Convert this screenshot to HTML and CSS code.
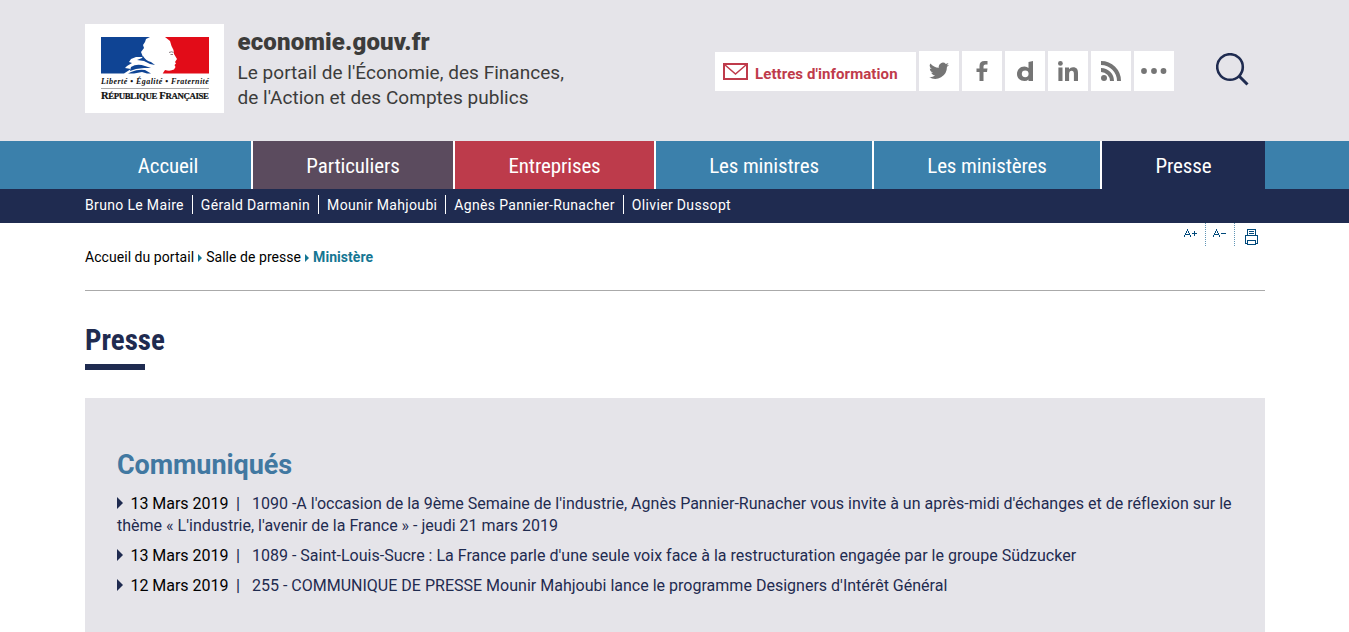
FILE: index.html
```html
<!DOCTYPE html>
<html lang="fr">
<head>
<meta charset="utf-8">
<title>Presse | economie.gouv.fr</title>
<link rel="stylesheet" href="styles.css">
</head>
<body>
<header class="header">
  <div class="container header-row">
    <div class="logo">
      <svg class="flag" width="108" height="37" viewBox="0 0 108 37">
        <path fill="#fff" d="M0 0H108V36.500H0Z"/>
        <path fill="#0f4494" d="M0 0H49L45 2 44 5 42 8 43 11 40 15 42 20 35 20 30 22 28 25 31 26 26 29 24 31 30 32 23 36.500H0Z"/>
        <path fill="#e20c18" d="M64 0H108V36.500H61.700L64 33Q69 34.500 73 32.500L74.500 30 73.500 28 75 26.500 74 25 76 22 73 17 72.500 13 70.500 9 69 4Z"/>
        <path fill="#0f4494" d="M42 19Q45 24 50 25L54 28 49 27 43 24 36 23 41 21ZM30 30Q36 26 44 29L50 31 43 31 35 32 29 34ZM30 35Q37 32 44 33L50 36.500H46L41 35 33 36.500H27Z"/>
        <path stroke="#8b8084" stroke-width="1" fill="none" d="M68 15.500Q71 14 72.500 15.500M69.500 17.500H72"/>
      </svg>
      <div class="motto">Liberté • Égalité • Fraternité</div>
      <div class="republic">R<small>ÉPUBLIQUE</small> F<small>RANÇAISE</small></div>
    </div>
    <div class="brand">
      <div class="site">economie.gouv.fr</div>
      <div class="tagline">Le portail de l'Économie, des Finances,<br>de l'Action et des Comptes publics</div>
    </div>
    <div class="social">
      <a class="letters"><svg width="25" height="17" viewBox="0 0 25 17" fill="none" stroke="#bf3b4b"><path stroke-width="2" d="M1 1H24V16H1Z"/><path stroke-width="1.500" d="M1.500 1.500L12.500 11 23.500 1.500"/></svg><span>Lettres d'information</span></a>
      <a class="tile"><svg width="20" height="18" viewBox="0 0 24 20"><path fill="#757575" d="M24 2.400a10 10 0 0 1-2.800.8A5 5 0 0 0 23.300.4a10 10 0 0 1-3.100 1.200A4.900 4.900 0 0 0 11.800 6 14 14 0 0 1 1.700.9a4.900 4.900 0 0 0 1.500 6.600A5 5 0 0 1 1 6.900a4.900 4.900 0 0 0 3.900 4.900 5 5 0 0 1-2.200.1 4.900 4.900 0 0 0 4.600 3.400A9.900 9.900 0 0 1 0 17.300 14 14 0 0 0 21.500 5 10 10 0 0 0 24 2.400Z"/></svg></a>
      <a class="tile"><svg width="12" height="20" viewBox="0 0 12 20"><path fill="#757575" d="M3.500 20V11H.5V7.500H3.500V5Q3.500 0 8.500 0H11.500V3.500H9.500Q7.500 3.500 7.500 5.300V7.500H11.500L11 11H7.500V20Z"/></svg></a>
      <a class="tile"><svg width="17" height="20" viewBox="0 0 17 20"><path fill="#757575" fill-rule="evenodd" d="M11.500 1L16 0V20H11.500V18.500Q10 20 7.500 20C3 20 0 17 0 13S3 5.500 7.500 5.500Q10 5.500 11.500 7ZM8.200 9.400A3.400 3.400 0 1 0 8.200 16.200A3.400 3.400 0 1 0 8.200 9.400Z"/></svg></a>
      <a class="tile"><svg width="20" height="20" viewBox="0 0 20 20"><g fill="#757575"><circle cx="2.400" cy="2.400" r="2.400"/><path d="M.4 6.500H4.500V20H.4ZM7 6.500H11V8.300Q12.300 6.200 15 6.200C19 6.200 20 8.500 20 12V20H15.900V13Q15.900 9.800 13.600 9.800T11.100 13V20H7Z"/></g></svg></a>
      <a class="tile"><svg width="20" height="20" viewBox="0 0 20 20"><circle cx="3" cy="17" r="3" fill="#757575"/><path fill="none" stroke="#757575" stroke-width="4" d="M0 9A11 11 0 0 1 11 20M0 2A18 18 0 0 1 18 20"/></svg></a>
      <a class="tile"><svg width="26" height="6" viewBox="0 0 26 6" fill="#757575"><circle cx="3" cy="3" r="2.900"/><circle cx="13" cy="3" r="2.900"/><circle cx="22.500" cy="3" r="2.900"/></svg></a>
    </div>
    <svg class="search" width="33" height="33" viewBox="0 0 33 33" fill="none" stroke="#1f2b50"><circle cx="14" cy="14" r="12.800" stroke-width="2.600"/><path stroke-width="3" d="M23 23L31.500 31.500"/></svg>
  </div>
</header>
<nav class="nav">
  <div class="container nav-row">
    <a class="home"><span>Accueil</span></a>
    <a class="people"><span>Particuliers</span></a>
    <a class="business"><span>Entreprises</span></a>
    <a class="ministers"><span>Les ministres</span></a>
    <a class="ministries"><span>Les ministères</span></a>
    <a class="press"><span>Presse</span></a>
  </div>
</nav>
<div class="subnav">
  <div class="container subnav-row"><a>Bruno Le Maire</a><a>Gérald Darmanin</a><a>Mounir Mahjoubi</a><a>Agnès Pannier-Runacher</a><a>Olivier Dussopt</a></div>
</div>
<main class="container">
  <div class="tools-row">
    <div class="crumbs"><a>Accueil du portail</a><i></i><a>Salle de presse</a><i></i><b>Ministère</b></div>
    <div class="tools">
      <a><svg width="13" height="9" viewBox="0 0 13 9" shape-rendering="crispEdges"><path fill="#00497b" d="M3 0h1v2h-1zM2 2h1v2h-1zM4 2h1v2h-1zM1 4h1v2h-1zM5 4h1v2h-1zM2 5h3v1h-3zM0 6h1v2h-1zM6 6h1v2h-1zM8 4h5v1h-5zM10 2h1v5h-1z"/></svg></a>
      <a><svg width="13" height="9" viewBox="0 0 13 9" shape-rendering="crispEdges"><path fill="#00497b" d="M3 0h1v2h-1zM2 2h1v2h-1zM4 2h1v2h-1zM1 4h1v2h-1zM5 4h1v2h-1zM2 5h3v1h-3zM0 6h1v2h-1zM6 6h1v2h-1zM8 4h5v1h-5z"/></svg></a>
      <a class="print"><svg width="13" height="16" viewBox="0 0 13 16" fill="none" stroke="#00497b" shape-rendering="crispEdges"><path d="M2.500 6V.5H10.500V6M4 2.500H9M4 4.500H9M2 14.500H.5V6.500H12.500V14.500H11M2.500 11.500H10.500V15.500H2.500Z"/></svg></a>
    </div>
  </div>
  <h1><span>Presse</span></h1>
  <section class="panel">
    <h2>Communiqués</h2>
    <ul>
      <li><i></i><span class="date">13 Mars 2019</span><span class="bar">|</span><a>1090 -A l'occasion de la 9ème Semaine de l'industrie, Agnès Pannier-Runacher vous invite à un après-midi d'échanges et de réflexion sur le thème « L'industrie, l'avenir de la France » - jeudi 21 mars 2019</a></li>
      <li><i></i><span class="date">13 Mars 2019</span><span class="bar">|</span><a>1089 - Saint-Louis-Sucre : La France parle d'une seule voix face à la restructuration engagée par le groupe Südzucker</a></li>
      <li><i></i><span class="date">12 Mars 2019</span><span class="bar">|</span><a>255 - COMMUNIQUE DE PRESSE Mounir Mahjoubi lance le programme Designers d'Intérêt Général</a></li>
    </ul>
  </section>
</main>
</body>
</html>
```
FILE: styles.css
```css
* { box-sizing: border-box; }
body { margin: 0; height: 632px; overflow: hidden; background: #fff; color: #000; font-family: Roboto, "Liberation Sans", sans-serif; }
.container { width: 1180px; margin-left: 85px; }
.header { height: 141px; background: #e5e4e9; }
.header-row { display: flex; align-items: flex-start; }
.logo { width: 139px; height: 89px; margin-top: 24.4px; background: #fff; padding: 12.6px 0 0 16px; white-space: nowrap; color: #111; font-family: "Liberation Serif", serif; }
.flag { display: block; }
.motto { font-size: 8px; line-height: 9px; margin-top: 3px; font-style: italic; font-weight: bold; letter-spacing: .46px; }
.republic { width: 108px; border-top: 1px solid #aaa; margin-top: 2px; font-size: 10.5px; line-height: 13px; font-weight: bold; letter-spacing: -.34px; -webkit-text-stroke: .2px #111; }
.republic small { font-size: 8.8px; }
.brand { margin: 26px 0 0 13.5px; width: 476.5px; color: #3c3c3b; }
.site { font-size: 24px; line-height: 32px; font-weight: 900; letter-spacing: .14px; }
.tagline { font-size: 19px; line-height: 25px; margin-top: 2px; letter-spacing: .03px; }
.social { display: flex; align-items: flex-end; gap: 3px; margin: 51px 0 0 1px; }
.letters { display: flex; align-items: center; width: 201px; height: 39px; background: #fff; padding-left: 8px; gap: 7px; color: #bf3b4b; font-size: 15px; font-weight: 700; white-space: nowrap; letter-spacing: .09px; }
.letters span { padding-top: 5px; }
.tile { display: flex; align-items: center; justify-content: center; width: 40px; height: 40px; background: #fff; }
.search { margin: 53px 0 0 42px; }
.nav { height: 48px; background: #3b80ab; }
.nav-row { display: flex; gap: 2px; background: #fff; height: 48px; }
.nav-row a { display: flex; align-items: center; justify-content: center; color: #fff; background: #3b80ab; font-family: "Roboto Condensed", Roboto, sans-serif; font-stretch: 75%; font-size: 21px; letter-spacing: -.12px; padding-top: 2px; }
.home { width: 166px; }
.nav-row .people { width: 200px; background: #5b4b5e; }
.nav-row .business { width: 199px; background: #bd3b4b; }
.ministers { width: 216px; }
.ministries { width: 226px; }
.nav-row .press { width: 163px; background: #1f2b50; }
.subnav { height: 34px; background: #1f2b50; }
.subnav-row { display: flex; padding-top: 6px; color: #fff; font-size: 14px; line-height: 19px; letter-spacing: .34px; }
.subnav-row a { height: 19px; padding: 1px 8px 0 0; margin-right: 8px; border-right: 1px solid #fff; line-height: 18px; white-space: nowrap; }
.subnav-row a:last-child { border: 0; }
.tools-row { height: 68px; display: flex; justify-content: space-between; border-bottom: 1px solid #aaa; }
.crumbs { display: flex; align-items: center; height: 20px; margin-top: 24px; font-size: 14px; letter-spacing: .05px; }
.crumbs i { border: solid transparent; border-width: 4px 0 4px 4px; border-left-color: #157693; margin: 2px 4px 0; }
.crumbs b { color: #157693; }
.tools { display: flex; }
.tools a { width: 29px; height: 23px; padding: 6px 0 0 7px; border-right: 1px dotted #6095b5; }
.tools .print { width: 30px; padding-left: 10px; border: 0; }
.tools svg { display: block; }
h1 { display: flex; margin: 33px 0 0; height: 46px; color: #1f2b50; font: 700 29px/32px "Roboto Condensed", Roboto, sans-serif; font-stretch: 75%; flex-direction: column; }
h1::after { content: ""; width: 60px; height: 6px; margin-top: 8px; background: #1f2b50; }
.panel { margin-top: 28px; padding: 51px 32px 0; height: 240px; background: #e5e4e9; }
h2 { margin: 0; font-size: 27px; line-height: 32px; letter-spacing: -.08px; color: #4178a1; }
ul { margin: 12px 0 0; padding: 0; list-style: none; font-size: 16px; line-height: 22px; }
li { margin-bottom: 8px; color: #1f2b50; letter-spacing: .01px; }
li i { display: inline-block; border: solid transparent; border-width: 6px 0 6px 6px; border-left-color: #1f2b50; margin-right: 7.5px; }
.date { color: #000; letter-spacing: -.03px; }
.bar { margin: 0 12px 0 7.5px; font-weight: 500; }
```
